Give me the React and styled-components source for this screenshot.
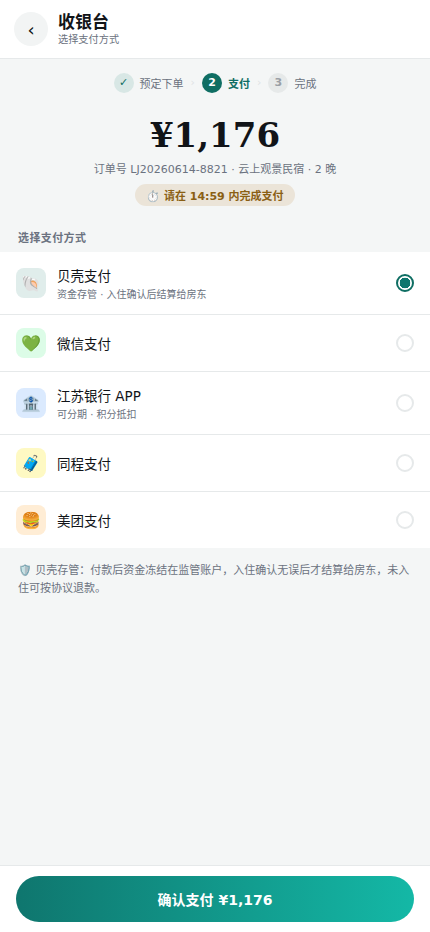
import React, { useState } from 'react';
import styled, { createGlobalStyle } from 'styled-components';

const methods = [
  {
    id: 'beike',
    icon: '🐚',
    name: '贝壳支付',
    desc: '资金存管 · 入住确认后结算给房东',
    bg: '#e0edeb',
  },
  { id: 'wechat', icon: '💚', name: '微信支付', bg: '#dcfce7' },
  {
    id: 'jsbank',
    icon: '🏦',
    name: '江苏银行 APP',
    desc: '可分期 · 积分抵扣',
    bg: '#dbeafe',
  },
  { id: 'tongcheng', icon: '🧳', name: '同程支付', bg: '#fef9c3' },
  { id: 'meituan', icon: '🍔', name: '美团支付', bg: '#ffedd5' },
];

const App = () => {
  const [selected, setSelected] = useState('beike');

  return (
    <>
      <GlobalStyle />
      <Page>
        <Header>
          <BackButton type='button' aria-label='返回'>
            ‹
          </BackButton>
          <div>
            <Title>收银台</Title>
            <Subtitle>选择支付方式</Subtitle>
          </div>
        </Header>
        <Content>
          <Steps>
            <Step>
              <StepDot $state='done'>✓</StepDot>
              <StepLabel>预定下单</StepLabel>
            </Step>
            <StepArrow>›</StepArrow>
            <Step $active>
              <StepDot $state='active'>2</StepDot>
              <StepLabel>支付</StepLabel>
            </Step>
            <StepArrow>›</StepArrow>
            <Step>
              <StepDot>3</StepDot>
              <StepLabel>完成</StepLabel>
            </Step>
          </Steps>
          <Summary>
            <Amount>¥1,176</Amount>
            <Order>订单号 LJ20260614-8821 · 云上观景民宿 · 2 晚</Order>
            <Countdown>⏱️ 请在 14:59 内完成支付</Countdown>
          </Summary>
          <SectionTitle>选择支付方式</SectionTitle>
          <MethodList>
            {methods.map(method => (
              <Method key={method.id} onClick={() => setSelected(method.id)}>
                <MethodIcon $bg={method.bg}>{method.icon}</MethodIcon>
                <MethodText>
                  <MethodName>{method.name}</MethodName>
                  {method.desc && <MethodDesc>{method.desc}</MethodDesc>}
                </MethodText>
                <Radio $checked={selected === method.id} />
              </Method>
            ))}
          </MethodList>
          <Note>
            🛡️ 贝壳存管：付款后资金冻结在监管账户，入住确认无误后才结算给房东，未入住可按协议退款。
          </Note>
        </Content>
        <Footer>
          <PayButton type='button'>确认支付 ¥1,176</PayButton>
        </Footer>
      </Page>
    </>
  );
};

const GlobalStyle = createGlobalStyle`
  * {
    box-sizing: border-box;
  }

  body {
    margin: 0;
    background: #f4f6f6;
    color: #111418;
    font-family: 'DejaVu Sans', 'Noto Sans CJK SC', 'Noto Color Emoji', sans-serif;
  }

  button {
    border: none;
    padding: 0;
    font-family: inherit;
    cursor: pointer;
  }
`;

const Page = styled.div`
  height: 100vh;
  display: flex;
  flex-direction: column;
  overflow: hidden;
`;

const Header = styled.header`
  height: 59px;
  flex-shrink: 0;
  display: flex;
  align-items: center;
  gap: 10px;
  padding: 0 14px;
  background: #fff;
  border-bottom: 1px solid #e6e9ea;
`;

const BackButton = styled.button`
  width: 34px;
  height: 34px;
  border-radius: 50%;
  background: #f2f4f4;
  color: #111418;
  font-size: 18px;
`;

const Title = styled.div`
  font-size: 17px;
  font-weight: 700;
  line-height: 20px;
`;

const Subtitle = styled.div`
  margin-top: 1px;
  font-size: 10.2px;
  line-height: 14px;
  color: #6b7280;
`;

const Content = styled.main`
  flex: 1;
`;

const Steps = styled.div`
  display: flex;
  justify-content: center;
  align-items: center;
  gap: 7px;
  height: 48px;
`;

const Step = styled.div`
  display: flex;
  align-items: center;
  gap: 6px;
  font-size: 11px;
  line-height: 20px;
  font-weight: ${({ $active }) => ($active ? 700 : 400)};
  color: ${({ $active }) => ($active ? '#0f6e63' : '#6b7280')};
`;

const StepLabel = styled.span`
  padding-top: 3px;
`;

const dotColors = {
  done: ['#d8e7e5', '#0f6e63'],
  active: ['#0f6e63', '#fff'],
  todo: ['#e6e9e9', '#9a9fa5'],
};

const StepDot = styled.span`
  width: 20px;
  height: 20px;
  display: flex;
  align-items: center;
  justify-content: center;
  border-radius: 50%;
  font-size: 11px;
  font-weight: 700;
  background: ${({ $state = 'todo' }) => dotColors[$state][0]};
  color: ${({ $state = 'todo' }) => dotColors[$state][1]};
`;

const StepArrow = styled.span`
  font-size: 11px;
  line-height: 20px;
  color: #dfe3e5;
`;

const Summary = styled.section`
  display: flex;
  flex-direction: column;
  align-items: center;
  padding-top: 8px;
`;

const Amount = styled.div`
  font-family: 'DejaVu Serif', serif;
  font-size: 34px;
  line-height: 40px;
  font-weight: 700;
`;

const Order = styled.div`
  margin-top: 6px;
  font-size: 11px;
  line-height: 18px;
  color: #6b7280;
`;

const Countdown = styled.div`
  height: 22px;
  margin-top: 5px;
  padding: 1px 11px 0;
  border-radius: 11px;
  background: #ebe4d8;
  color: #8a5f14;
  font-size: 11px;
  font-weight: 700;
  line-height: 24px;
`;

const SectionTitle = styled.h2`
  margin: 24px 18px 4px;
  font-size: 11px;
  font-weight: 700;
  line-height: 18px;
  letter-spacing: 0.4px;
  color: #6b7280;
`;

const MethodList = styled.div`
  background: #fff;
`;

const Method = styled.div`
  display: flex;
  align-items: center;
  gap: 11px;
  padding: 13px 16px;
  cursor: pointer;

  &:not(:last-child) {
    border-bottom: 1px solid #e6e9ea;
  }
`;

const MethodIcon = styled.div`
  width: 30px;
  height: 30px;
  display: flex;
  align-items: center;
  justify-content: center;
  border-radius: 8px;
  font-size: 16px;
  background: ${({ $bg }) => $bg};
`;

const MethodText = styled.div`
  flex: 1;
`;

const MethodName = styled.div`
  padding-top: 2px;
  font-size: 13.5px;
  line-height: 20px;

  &:not(:last-child) {
    padding: 1px 0;
  }
`;

const MethodDesc = styled.div`
  padding-top: 1px;
  font-size: 10px;
  line-height: 13px;
  color: #6b7280;
`;

const Radio = styled.span`
  width: 18px;
  height: 18px;
  border-radius: 50%;
  border: 2px solid ${({ $checked }) => ($checked ? '#0f6e63' : '#e6e9ea')};
  background: ${({ $checked }) =>
    $checked ? 'radial-gradient(#0f766e 54%, #fff 56%)' : '#fff'};
`;

const Note = styled.p`
  margin: 14px 18px 0;
  font-size: 11px;
  line-height: 18px;
  color: #6b7280;
`;

const Footer = styled.footer`
  padding: 10px 16px;
  background: #fff;
  border-top: 1px solid #e6e9ea;
`;

const PayButton = styled.button`
  display: block;
  width: 100%;
  height: 46px;
  border-radius: 23px;
  background: linear-gradient(90deg, #0f766e, #14b8a6);
  color: #fff;
  font-size: 14px;
  font-weight: 700;
`;

export default App;
